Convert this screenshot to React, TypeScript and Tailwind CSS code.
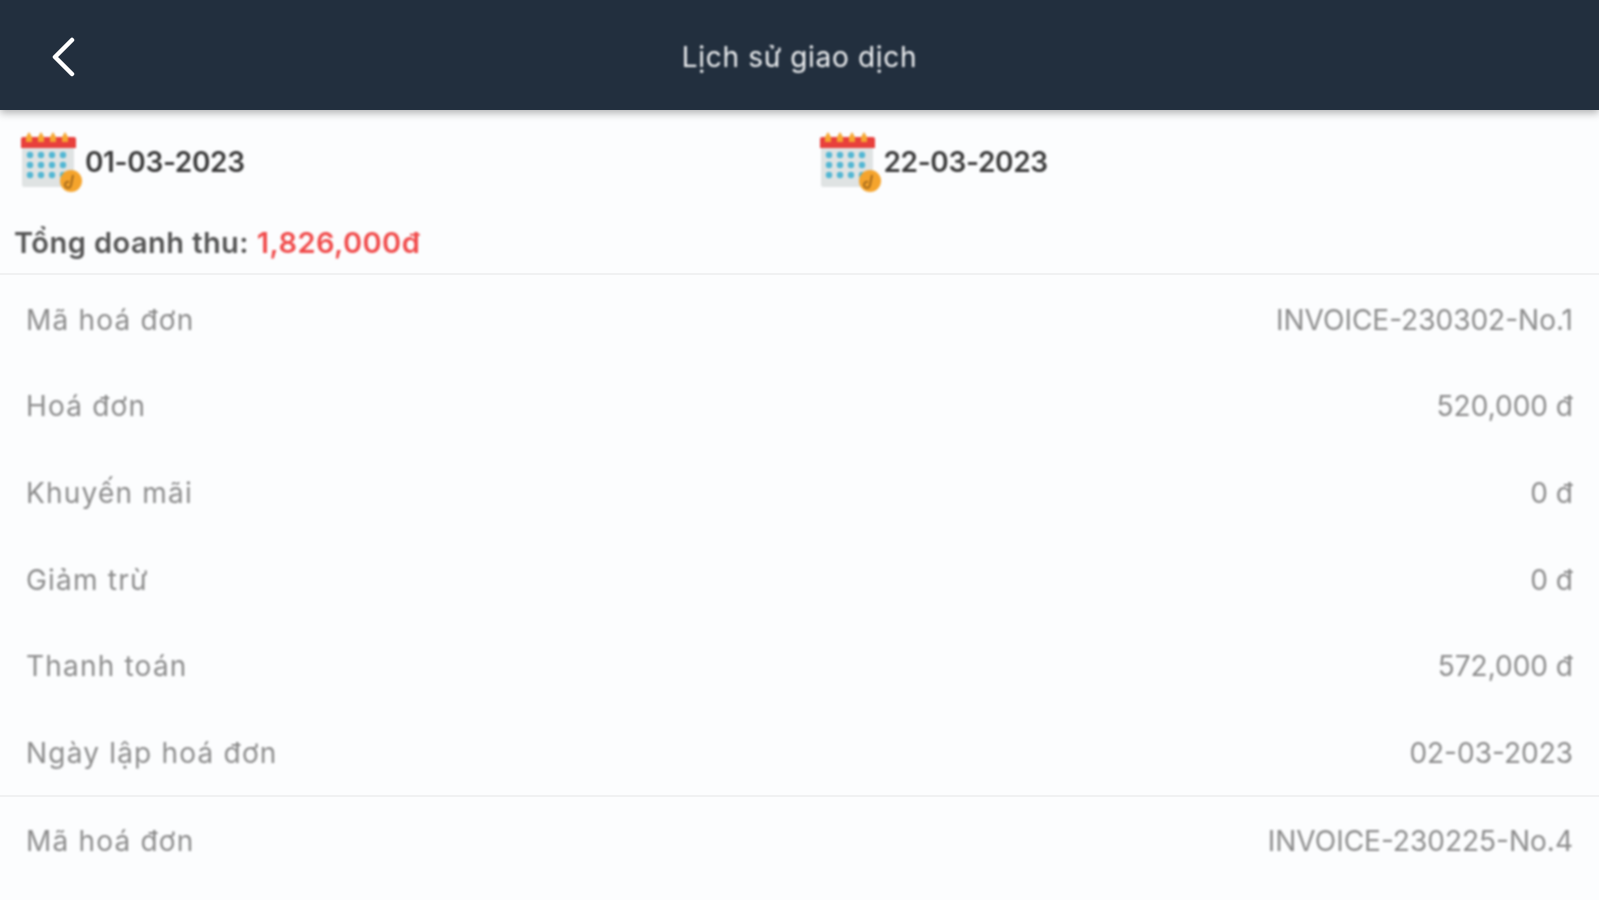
const font = { fontFamily: '"Inter", "Lato", sans-serif' };

function CalendarIcon() {
  return (
    <svg width="62" height="62" viewBox="0 0 62 62" className="shrink-0 blur-[0.8px]">
      <rect x="2" y="14" width="52" height="42" rx="2" fill="#dfe3e3" />
      <path d="M1 8a2 2 0 0 1 2-2h51a2 2 0 0 1 2 2v9H1z" fill="#e8403c" />
      {[9, 21, 33, 45].map((x) => (
        <path key={x} d="M0 0l3 5v5h-6v-5z" transform={`translate(${x} 1)`} fill="#f6a531" />
      ))}
      {[24, 34, 44].map((y) =>
        [10, 21, 32, 43].map((x) => <circle key={`${x}-${y}`} cx={x} cy={y} r="3.2" fill="#53b7d3" />),
      )}
      <circle cx="51" cy="50" r="11" fill="#f5a42c" />
      <path d="M53 44l-2 10a3 3 0 1 1-2-3" stroke="#a86c1d" strokeWidth="2" fill="none" />
    </svg>
  );
}

function DateBox({ value }: { value: string }) {
  return (
    <div className="flex w-1/2 items-center pl-5 odd:pl-5 even:pl-[19px]">
      <CalendarIcon />
      <span className="ml-[3px] pt-[1px] text-[28px] font-semibold tracking-[-0.35px] text-[#3a3a3a] blur-[0.9px]">{value}</span>
    </div>
  );
}

function Row({ label, value }: { label: string; value: string }) {
  return (
    <div className="flex h-[86.6px] items-center justify-between px-[26px] pt-[3px] text-[28px] text-[#8c8c8c]">
      <span className="tracking-[1.2px] blur-[0.9px]">{label}</span>
      <span className="blur-[0.9px]">{value}</span>
    </div>
  );
}

export default function App() {
  return (
    <div className="h-[900px] w-[1599px] overflow-hidden bg-[#fcfdfe]" style={font}>
      <header className="relative flex h-[110px] items-center justify-center bg-[#222f3e] pt-[3px] shadow-[0_3px_8px_rgba(0,0,0,0.3)]">
        <svg width="28" height="40" viewBox="0 0 28 40" className="absolute left-[49px] top-[37px] blur-[0.6px]" fill="none">
          <path d="M23 3L6 20l17 17" stroke="#ffffff" strokeWidth="4.5" strokeLinecap="round" strokeLinejoin="round" />
        </svg>
        <span className="text-[28px] tracking-[0.67px] text-[#eef0f2] blur-[0.9px]">Lịch sử giao dịch</span>
      </header>
      <div className="flex h-[100px] items-center pt-[3px]">
        <DateBox value="01-03-2023" />
        <DateBox value="22-03-2023" />
      </div>
      <div className="flex h-[65px] items-start border-b-2 border-[#f0f1f2] pl-[14px] pt-[11px] text-[29px] font-semibold tracking-[0.45px] text-[#555555]">
        <span className="blur-[0.9px]">Tổng doanh thu:&nbsp;</span>
        <span className="text-[#f04c4c] blur-[0.9px]">1,826,000đ</span>
      </div>
      <div className="border-b-2 border-[#f0f1f2]">
        <Row label="Mã hoá đơn" value="INVOICE-230302-No.1" />
        <Row label="Hoá đơn" value="520,000 đ" />
        <Row label="Khuyến mãi" value="0 đ" />
        <Row label="Giảm trừ" value="0 đ" />
        <Row label="Thanh toán" value="572,000 đ" />
        <Row label="Ngày lập hoá đơn" value="02-03-2023" />
      </div>
      <Row label="Mã hoá đơn" value="INVOICE-230225-No.4" />
    </div>
  );
}
